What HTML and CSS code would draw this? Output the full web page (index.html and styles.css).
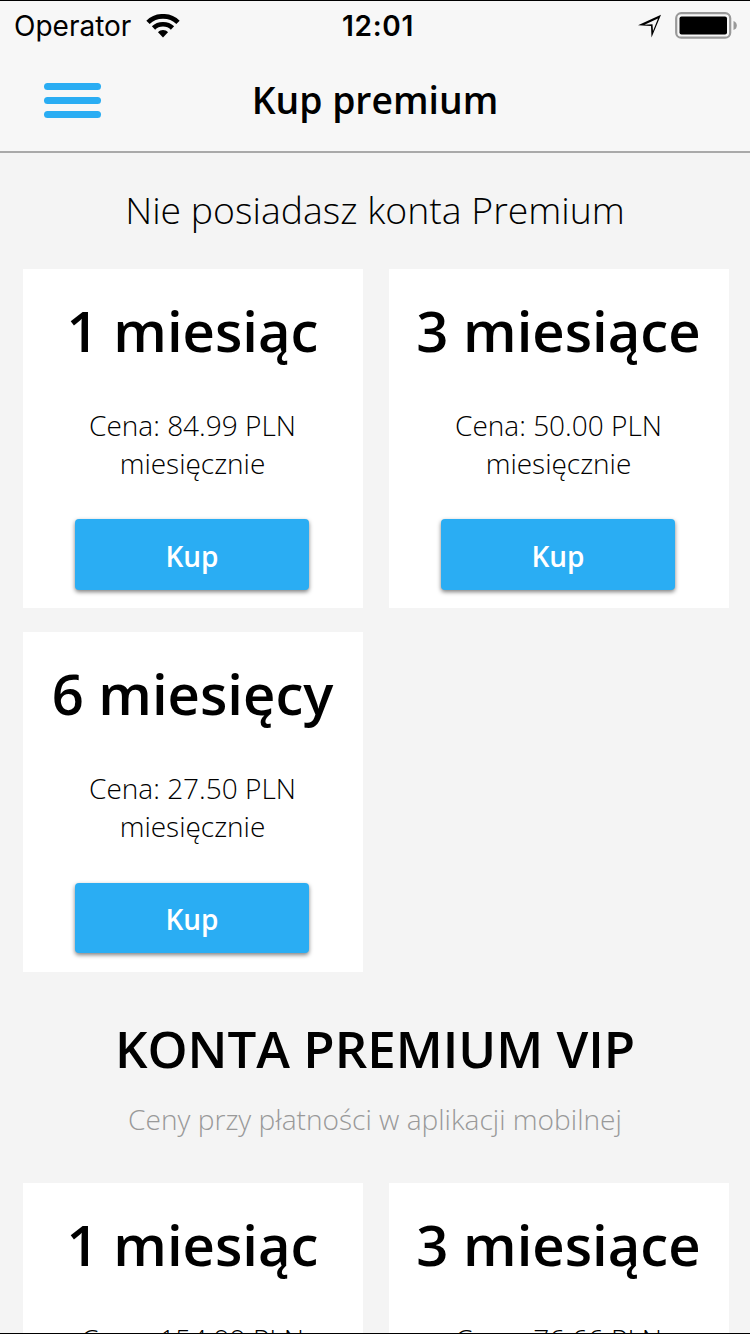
FILE: index.html
```html
<!DOCTYPE html>
<html lang="pl">
<head>
<meta charset="utf-8">
<title>Kup premium</title>
<link rel="stylesheet" href="styles.css">
</head>
<body>
<div class="screen">
  <div class="status">
    <div class="carrier"><span>Operator</span>
      <svg class="wifi" width="34" height="24" viewBox="0 0 34 24"><g fill="none" stroke="#000"><path stroke-width="4.700" d="M2 8.300C10 .300 24 .300 32 8.300"/><path stroke-width="4.600" d="M7.500 14C12.500 9 21.500 9 26.500 14"/></g><path d="M17 23.500L12 18.300C14.500 15.300 19.500 15.300 22 18.300z"/></svg>
    </div>
    <div class="clock">12:01</div>
    <div class="indicators">
      <svg width="24" height="24" viewBox="0 0 24 24"><path d="M0 11.300L23 .800 13.500 23.500 13 12z M6.500 10.800L14.500 10.300 15 17 20 4.500z" fill-rule="evenodd"/></svg>
      <svg width="63" height="28" viewBox="0 0 63 28"><rect x="1.200" y="1.200" width="54" height="24.500" rx="5" fill="none" stroke="#999" stroke-width="2.200"/><rect x="4.500" y="4.500" width="47.500" height="18" rx="2"/><path d="M58.500 9q3.300 1 3.300 4.500t-3.300 4.500z" fill="#999"/></svg>
    </div>
  </div>
  <header class="nav">
    <div class="menu"><i></i><i></i><i></i></div>
    <h1>Kup premium</h1>
  </header>
  <p class="lead">Nie posiadasz konta Premium</p>
  <section class="grid">
    <article class="card"><h2>1 miesiąc</h2><p>Cena: 84.99 PLN<br>miesięcznie</p><button>Kup</button></article>
    <article class="card"><h2>3 miesiące</h2><p>Cena: 50.00 PLN<br>miesięcznie</p><button>Kup</button></article>
    <article class="card"><h2>6 miesięcy</h2><p>Cena: 27.50 PLN<br>miesięcznie</p><button>Kup</button></article>
  </section>
  <h2 class="vip">KONTA PREMIUM VIP</h2>
  <p class="note">Ceny przy płatności w aplikacji mobilnej</p>
  <section class="grid">
    <article class="card"><h2>1 miesiąc</h2><p>Cena: 154.99 PLN</p></article>
    <article class="card"><h2>3 miesiące</h2><p>Cena: 76.66 PLN</p></article>
  </section>
</div>
</body>
</html>
```
FILE: styles.css
```css
* { box-sizing: border-box; margin: 0; padding: 0; }
body { font-family: "Open Sans", sans-serif; color: #000; background: #f4f4f4; }
.screen { width: 750px; height: 1334px; overflow: hidden; border-top: 1px solid #000; border-bottom: 1px solid #000; }
.status { height: 49px; background: #f7f7f7; display: grid; grid-template-columns: 1fr 1fr 1fr; align-items: center; padding: 0 12px 0 14px; font: 28px/48px Inter, sans-serif; }
.carrier { display: flex; align-items: center; gap: 15px; }
.clock { text-align: center; font-weight: 600; letter-spacing: .7px; padding-left: 4px; }
.indicators { display: flex; justify-content: flex-end; align-items: center; gap: 13px; }
.nav { height: 103px; background: #f7f7f7; border-bottom: 2px solid #a9a9a9; display: grid; grid-template-columns: 101px 1fr 101px; align-items: center; }
.menu { display: flex; flex-direction: column; gap: 7px; padding-left: 44px; }
.menu i { height: 7px; border-radius: 4px; background: #2aadf3; }
.nav h1 { font-size: 37.3px; font-weight: 600; text-align: center; padding-bottom: 2px; }
.lead { height: 116px; line-height: 114px; font-size: 37.4px; font-weight: 300; text-align: center; }
.grid { display: grid; grid-template-columns: 340px 340px; grid-template-rows: 339px 340px; gap: 24px 26px; padding-left: 23px; }
.card { background: #fff; display: flex; flex-direction: column; align-items: center; padding: 23px 1px 0 0; white-space: nowrap; }
.card h2 { font-size: 56.2px; line-height: 76px; font-weight: 600; }
.card p { margin-top: 39px; font-size: 28px; line-height: 37.5px; font-weight: 300; text-align: center; }
.card button { width: 234px; height: 71px; margin: 37px 1px 0 0; padding-top: 2px; border: 0; border-radius: 4px; background: #2aadf3; color: #fff; font: 600 28px "Open Sans", sans-serif; box-shadow: 0 2px 4px rgba(0,0,0,.5); }
.card:nth-child(3) button { height: 70px; margin-top: 38px; }
.vip { margin-top: 40px; font-size: 51px; line-height: 72px; font-weight: 600; text-align: center; }
.note { height: 99px; padding-top: 16px; font-size: 28.1px; line-height: 38px; font-weight: 300; text-align: center; color: #999; }
```
